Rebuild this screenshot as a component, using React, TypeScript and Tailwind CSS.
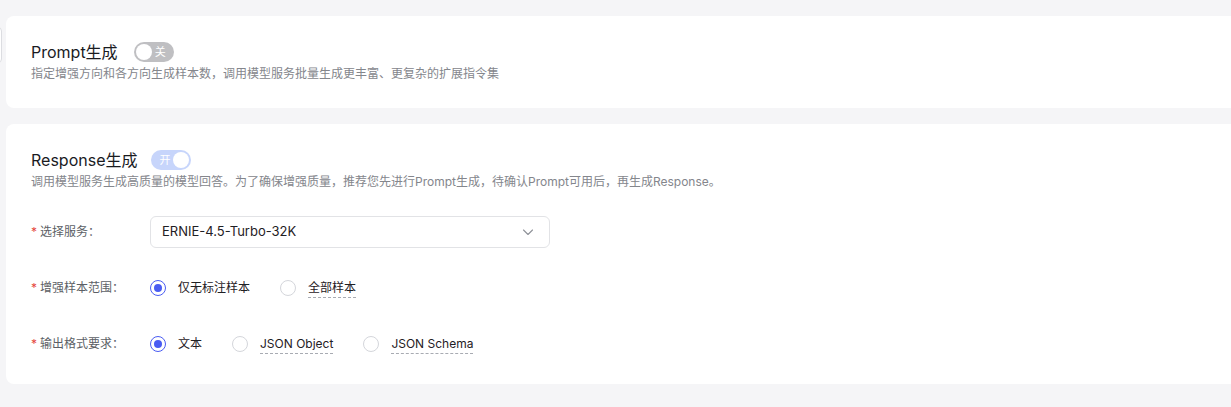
const font = { fontFamily: '"Inter", "Noto Sans CJK SC", sans-serif' };

const Toggle = ({ on, label }: { on: boolean; label: string }) => (
  <span
    className={`relative inline-flex items-center w-[40px] h-[20px] rounded-full ${
      on ? "bg-[#c7d5fb] justify-start" : "bg-[#bfbfc2] justify-end"
    }`}
  >
    <span className={`text-[11px] leading-none text-white ${on ? "pl-[8px]" : "pr-[8px]"}`}>{label}</span>
    <span
      className={`absolute top-[2px] w-[16px] h-[16px] rounded-full bg-white ${on ? "right-[2px]" : "left-[2px]"}`}
    />
  </span>
);

const Radio = ({ checked, label, dashed }: { checked?: boolean; label: string; dashed?: boolean }) => (
  <label className="flex items-center gap-[12px] mr-[30px]">
    <span
      className={`flex items-center justify-center w-[16px] h-[16px] rounded-full border ${
        checked ? "border-[#4a5cf2]" : "border-[#d4d6db]"
      }`}
    >
      {checked && <span className="w-[8px] h-[8px] rounded-full bg-[#4a5cf2]" />}
    </span>
    <span
      className={`text-[12px] leading-[18px] text-[#1f2024] ${dashed ? "border-b border-dashed border-[#a8abb2]" : ""}`}
    >
      {label}
    </span>
  </label>
);

const FormRow = ({ label, children }: { label: string; children: React.ReactNode }) => (
  <div className="flex items-center h-[32px]">
    <div className="w-[119px] flex items-center text-[12px] text-[#5c5f66]">
      <span className="text-[#e5483d] mr-[3px] text-[12px]">*</span>
      {label}：
    </div>
    <div className="flex items-center">{children}</div>
  </div>
);

export default function App() {
  return (
    <div className="relative w-[1231px] h-[407px] bg-[#f5f5f7] overflow-hidden" style={font}>
      <div className="absolute left-[-20px] top-[27px] w-[22px] h-[36px] rounded-[4px] border border-[#dcdde1] bg-white" />
      <div className="pt-[16px] pl-[6px] flex flex-col gap-[16px]">
        <div className="bg-white rounded-l-[8px] pl-[25px] pt-[24px] pb-[24px]">
          <div className="flex items-center h-[24px]">
            <span className="text-[16px] font-normal text-[#1a1b1f]">Prompt生成</span>
            <span className="ml-[16px] flex">
              <Toggle on={false} label="关" />
            </span>
          </div>
          <div className="text-[12px] leading-[20px] text-[#84868c]">
            指定增强方向和各方向生成样本数，调用模型服务批量生成更丰富、更复杂的扩展指令集
          </div>
        </div>

        <div className="bg-white rounded-l-[8px] pl-[25px] pt-[24px] pb-[24px]">
          <div className="flex items-center h-[24px]">
            <span className="text-[16px] font-normal text-[#1a1b1f]">Response生成</span>
            <span className="ml-[14px] flex">
              <Toggle on label="开" />
            </span>
          </div>
          <div className="text-[12px] leading-[20px] text-[#84868c]">
            调用模型服务生成高质量的模型回答。为了确保增强质量，推荐您先进行Prompt生成，待确认Prompt可用后，再生成Response。
          </div>

          <div className="mt-[24px] flex flex-col gap-[24px]">
            <FormRow label="选择服务">
              <div className="w-[400px] h-[32px] rounded-[6px] border border-[#e2e3e6] flex items-center justify-between pl-[11px] pr-[14px]">
                <span className="text-[13px] text-[#1f2024]">ERNIE-4.5-Turbo-32K</span>
                <svg width="14" height="14" viewBox="0 0 14 14" fill="none">
                  <path d="M2.5 5 L7 9.5 L11.5 5" stroke="#8f9299" strokeWidth="1.1" strokeLinecap="round" strokeLinejoin="round" />
                </svg>
              </div>
            </FormRow>
            <FormRow label="增强样本范围">
              <Radio checked label="仅无标注样本" />
              <Radio label="全部样本" dashed />
            </FormRow>
            <FormRow label="输出格式要求">
              <Radio checked label="文本" />
              <Radio label="JSON Object" dashed />
              <Radio label="JSON Schema" dashed />
            </FormRow>
          </div>
        </div>
      </div>
    </div>
  );
}
